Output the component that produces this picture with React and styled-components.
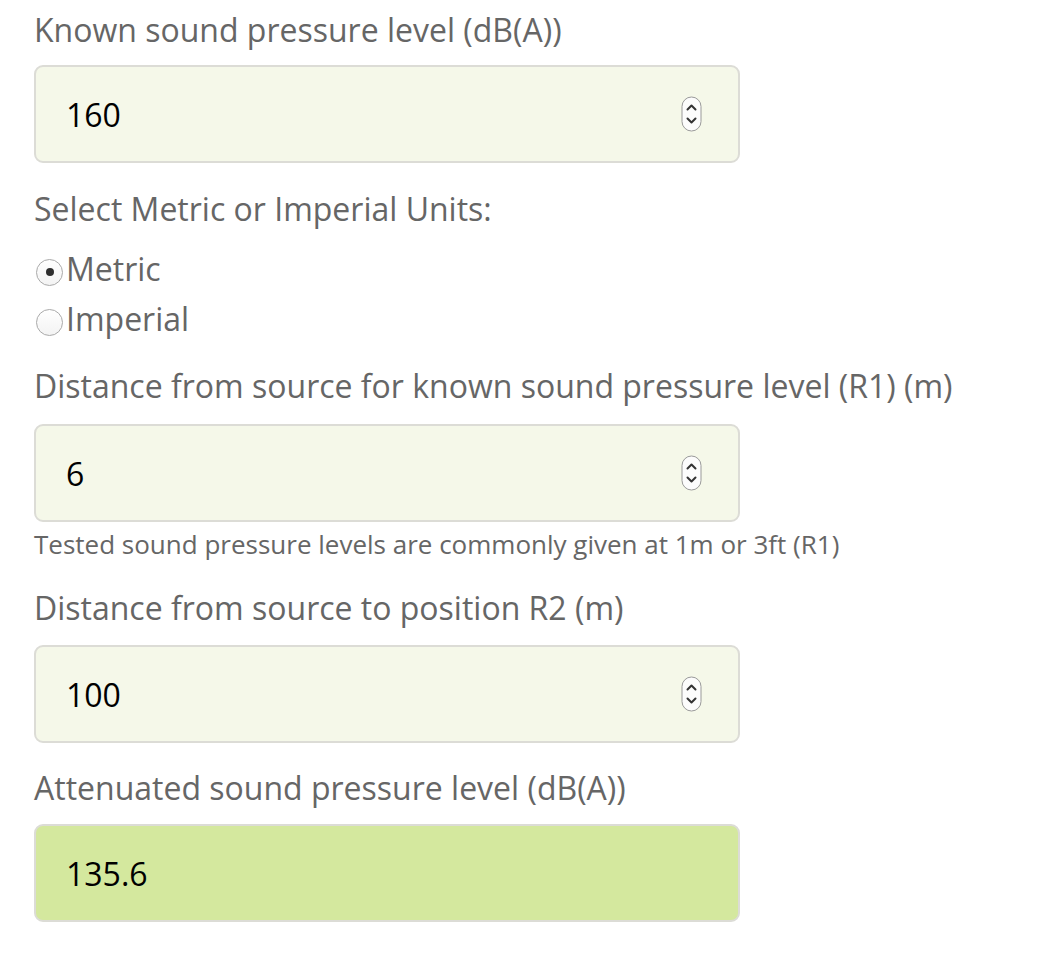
import React from "react";
import styled, { createGlobalStyle } from "styled-components";

const Global = createGlobalStyle`
  html, body { margin: 0; padding: 0; background: #fff; }
  body { font-family: "Open Sans", "Noto Sans", sans-serif; }
`;

const Form = styled.form`
  display: flex;
  flex-direction: column;
  padding: 3px 0 0 34px;
  width: 706px;
`;

const Group = styled.div`
  display: flex;
  flex-direction: column;
  margin-bottom: ${(p) => p.$gap ?? 16}px;
`;

const Label = styled.label`
  font-size: 32px;
  line-height: 48px;
  color: #666;
  padding-top: 3px;
  margin-bottom: ${(p) => p.$space ?? 11}px;
  white-space: nowrap;
`;

const Box = styled.div`
  box-sizing: border-box;
  height: 98px;
  display: flex;
  align-items: center;
  padding: 0 36px 0 30px;
  border: 2px solid #dcdcd6;
  border-radius: 9px;
  background: ${(p) => (p.$result ? "#d4e89e" : "#f5f8e9")};
`;

const Field = styled.input`
  flex: 1;
  min-width: 0;
  border: none;
  outline: none;
  background: transparent;
  font-family: "Open Sans", "Noto Sans", sans-serif;
  font-size: 32px;
  color: #000;
  padding: 0;
  margin: 0;
`;

const Help = styled.div`
  font-size: 26px;
  line-height: 39px;
  padding-top: 3px;
  color: #666;
  white-space: nowrap;
`;

const RadioRow = styled.label`
  display: flex;
  align-items: center;
  height: 50px;
  font-size: 32px;
  line-height: 50px;
  color: #666;
  cursor: pointer;
`;

const RadioDot = styled.span`
  box-sizing: border-box;
  width: 27px;
  height: 27px;
  margin: 6px 3px 0 2px;
  border-radius: 50%;
  border: 1px solid #a9a9a9;
  background: linear-gradient(#ffffff, #f3f3f3);
  display: flex;
  align-items: center;
  justify-content: center;
  &::after {
    content: "";
    width: 8px;
    height: 8px;
    border-radius: 50%;
    background: ${(p) => (p.$checked ? "#2e2e2e" : "transparent")};
  }
`;

const Spinner = () => (
  <svg width="21" height="36" viewBox="0 0 21 36" style={{ flex: "none" }}>
    <rect x="1" y="1" width="19" height="34" rx="9.5" fill="#fcfcfc" stroke="#9a9a9a" strokeWidth="1" />
    <path d="M6.5 13.5 L10.5 9.5 L14.5 13.5" fill="none" stroke="#333" strokeWidth="2" strokeLinecap="round" strokeLinejoin="round" />
    <path d="M6.5 22.5 L10.5 26.5 L14.5 22.5" fill="none" stroke="#333" strokeWidth="2" strokeLinecap="round" strokeLinejoin="round" />
  </svg>
);

const NumberBox = ({ value }) => (
  <Box>
    <Field type="text" defaultValue={value} />
    <Spinner />
  </Box>
);

export default function App() {
  return (
    <>
      <Global />
      <Form onSubmit={(e) => e.preventDefault()}>
        <Group $gap={19}>
          <Label>Known sound pressure level (dB(A))</Label>
          <NumberBox value="160" />
        </Group>
        <Group $gap={15}>
          <Label>Select Metric or Imperial Units:</Label>
          <RadioRow>
            <RadioDot $checked />
            Metric
          </RadioRow>
          <RadioRow>
            <RadioDot />
            Imperial
          </RadioRow>
        </Group>
        <Group $gap={17}>
          <Label $space={14}>Distance from source for known sound pressure level (R1) (m)</Label>
          <NumberBox value="6" />
          <Help>Tested sound pressure levels are commonly given at 1m or 3ft (R1)</Help>
        </Group>
        <Group $gap={18}>
          <Label $space={13}>Distance from source to position R2 (m)</Label>
          <NumberBox value="100" />
        </Group>
        <Group $gap={0}>
          <Label $space={12}>Attenuated sound pressure level (dB(A))</Label>
          <Box $result>
            <Field type="text" readOnly defaultValue="135.6" />
          </Box>
        </Group>
      </Form>
    </>
  );
}
